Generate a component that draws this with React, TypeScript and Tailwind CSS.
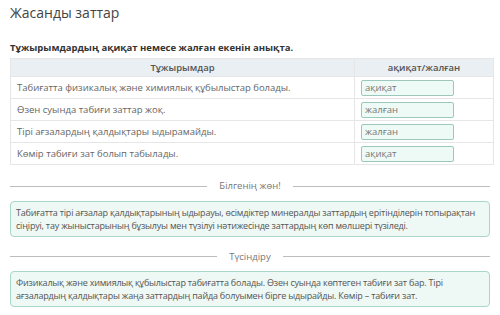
import React from 'react';

const rows: [string, string][] = [
  ['Табиғатта физикалық және химиялық құбылыстар болады.', 'ақиқат'],
  ['Өзен суында табиғи заттар жоқ.', 'жалған'],
  ['Тірі ағзалардың қалдықтары ыдырамайды.', 'жалған'],
  ['Көмір табиғи зат болып табылады.', 'ақиқат'],
];

const Divider = ({ label }: { label: string }) => (
  <div className="flex items-center gap-3 px-[10px]">
    <div className="h-px flex-1 bg-[#bdbdbd]" />
    <span className="text-[9.5px] text-[#777]">{label}</span>
    <div className="h-px flex-1 bg-[#bdbdbd]" />
  </div>
);

const Note = ({ children }: { children: React.ReactNode }) => (
  <div className="mx-[10px] rounded-[4px] border border-[#a9d6c8] bg-[#eef8f4] px-[5px] py-[4px] text-[9px] leading-[13px] tracking-[-0.2px] text-[#555]">
    {children}
  </div>
);

export default function App(): React.ReactElement {
  return (
    <div className="h-[315px] w-[500px] overflow-hidden bg-white font-['Open_Sans',sans-serif]">
      <div className="px-[10px] pt-[2px] text-[14px] text-[#444]">Жасанды заттар</div>

      <div className="mt-[18px] px-[10px] text-[9.5px] font-bold text-[#333]">
        Тұжырымдардың ақиқат немесе жалған екенін анықта.
      </div>

      <table className="mx-[10px] mt-[3px] w-[484px] table-fixed border-collapse text-[9.5px] text-[#666]">
        <thead>
          <tr className="h-[18px] bg-[#e9eff2]">
            <th className="border border-[#e6e6e6] text-center font-semibold text-[#555]">Тұжырымдар</th>
            <th className="w-[139px] border border-[#e6e6e6] text-center font-semibold text-[#555]">ақиқат/жалған</th>
          </tr>
        </thead>
        <tbody>
          {rows.map(([text, answer], i) => (
            <tr key={i} className="h-[22px]">
              <td className="border border-[#e6e6e6] px-[6px]">{text}</td>
              <td className="border border-[#e6e6e6] px-[6px]">
                <div className="flex h-[16px] w-[93px] items-center rounded-[2px] border border-[#9cc8bb] bg-[#eefaf6] px-[3px] text-[#777]">
                  {answer}
                </div>
              </td>
            </tr>
          ))}
        </tbody>
      </table>

      <div className="mt-[14px]">
        <Divider label="Білгенің жөн!" />
      </div>
      <div className="mt-[7px]">
        <Note>
          Табиғатта тірі ағзалар қалдықтарының ыдырауы, өсімдіктер минералды заттардың ерітінділерін топырақтан
          сіңіруі, тау жыныстарының бұзылуы мен түзілуі нәтижесінде заттардың көп мөлшері түзіледі.
        </Note>
      </div>

      <div className="mt-[13px]">
        <Divider label="Түсіндіру" />
      </div>
      <div className="mt-[7px]">
        <Note>
          Физикалық және химиялық құбылыстар табиғатта болады. Өзен суында көптеген табиғи зат бар. Тірі
          ағзалардың қалдықтары жаңа заттардың пайда болуымен бірге ыдырайды. Көмір – табиғи зат.
        </Note>
      </div>
    </div>
  );
}
